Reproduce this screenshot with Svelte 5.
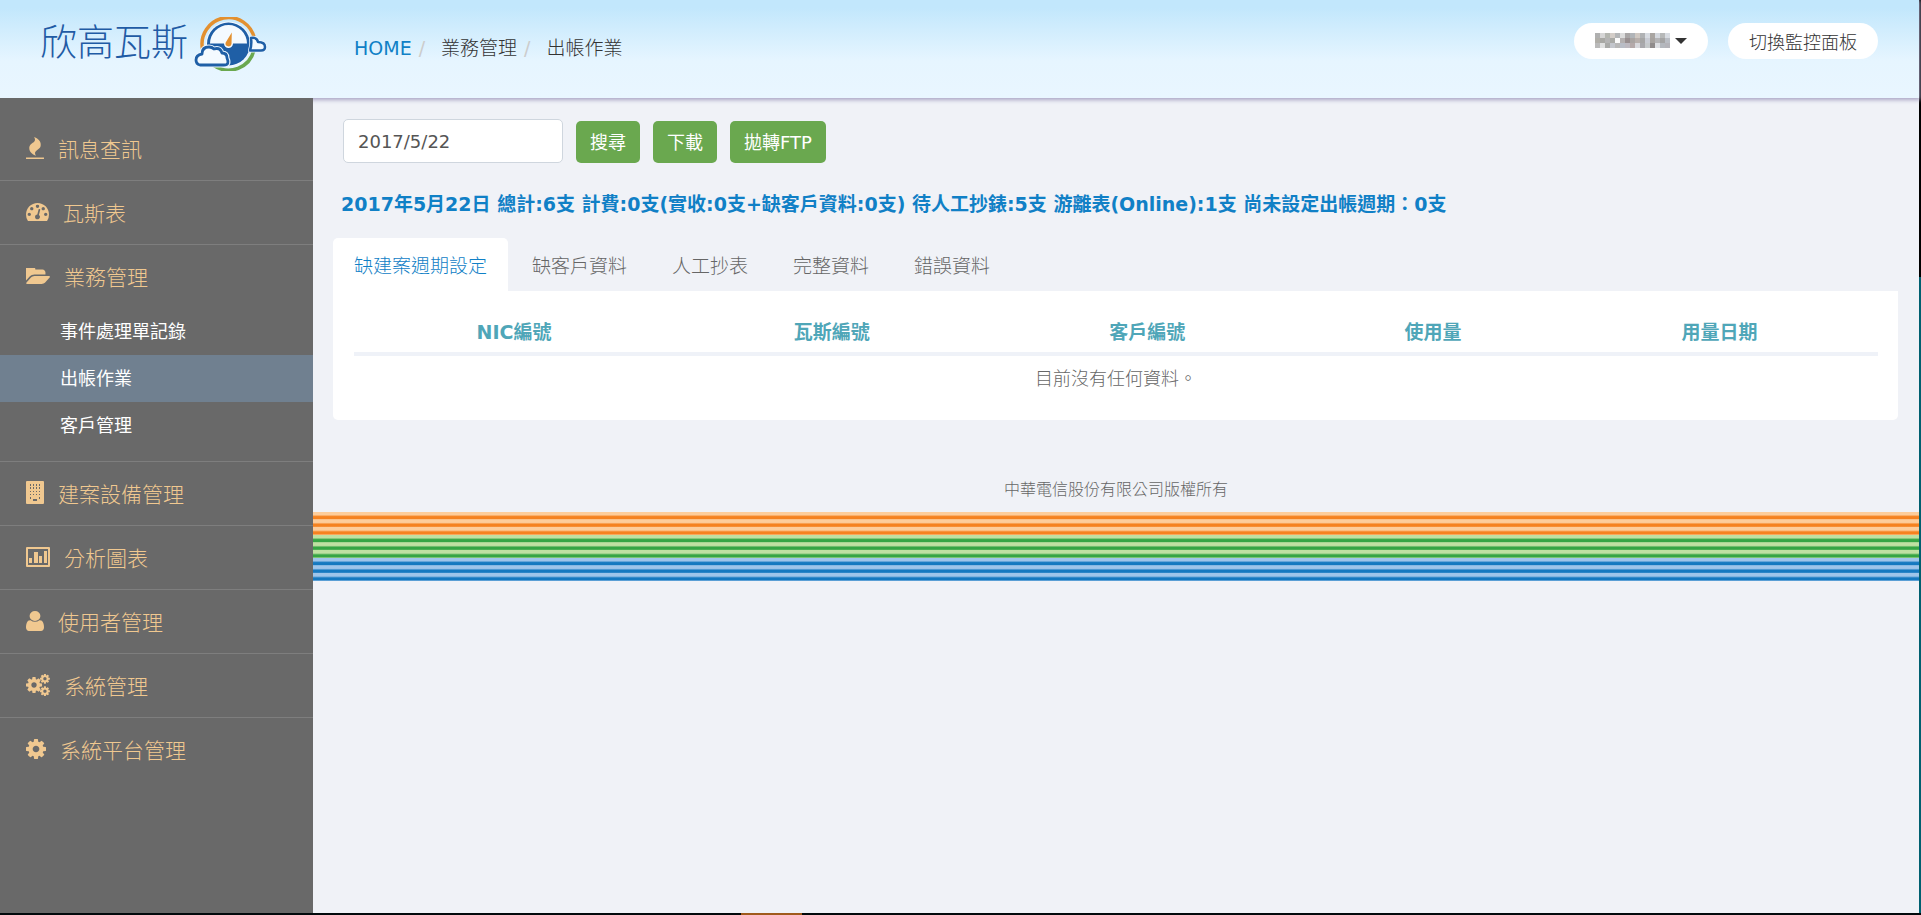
<script>
  let date = '2017/5/22';
  let activeTab = 0;

  const cog =
    'M1152 896q0-106-75-181t-181-75-181 75-75 181 75 181 181 75 181-75 75-181zm512-109v222q0 12-8 23t-20 13l-185 28q-19 54-39 91 35 50 107 138 10 12 10 25t-9 23q-27 37-99 108t-94 71q-12 0-26-9l-138-108q-44 23-91 38-16 136-29 186-7 28-36 28h-222q-14 0-24.5-8.5t-11.5-21.5l-28-184q-49-16-90-37l-141 107q-10 9-25 9-14 0-25-11-126-114-165-168-7-10-7-23 0-12 8-23 15-21 51-66.5t54-70.5q-27-50-41-99l-183-27q-13-2-21-12.5t-8-23.5v-222q0-12 8-23t19-13l186-28q14-46 39-92-40-57-107-138-10-12-10-24 0-10 9-23 26-36 98.5-107.5t94.5-71.5q13 0 26 10l138 107q44-23 91-38 16-136 29-186 7-28 36-28h222q14 0 24.5 8.5t11.5 21.5l28 184q49 16 90 37l142-107q9-9 24-9 13 0 25 10 129 119 165 170 7 8 7 22 0 12-8 23-15 21-51 66.5t-54 70.5q26 50 41 98l183 28q13 2 21 12.5t8 23.5z';

  const icons = {
    fire: {
      width: 18,
      height: 22,
      box: '192 0 1408 1792',
      path: 'M1600 1696v64q0 13-9.5 22.5t-22.5 9.5h-1344q-13 0-22.5-9.5t-9.5-22.5v-64q0-13 9.5-22.5t22.5-9.5h1344q13 0 22.5 9.5t9.5 22.5zm-256-1056q0 78-24.5 144t-64 112.5-87.5 88-96 77.5-87.5 72-64 81.5-24.5 96.5q0 96 67 224l-4-1 1 1q-90-41-160-83t-138.5-100-113.5-122.5-72.5-150.5-27.5-184q0-78 24.5-144t64-112.5 87.5-88 96-77.5 87.5-72 64-81.5 24.5-96.5q0-94-66-224l3 1-1-1q90 41 160 83t138.5 100 113.5 122.5 72.5 150.5 27.5 184z',
    },
    gauge: {
      width: 23,
      height: 18,
      box: '0 256 1792 1408',
      path: 'M384 1152q0-53-37.5-90.5t-90.5-37.5-90.5 37.5-37.5 90.5 37.5 90.5 90.5 37.5 90.5-37.5 37.5-90.5zm192-448q0-53-37.5-90.5t-90.5-37.5-90.5 37.5-37.5 90.5 37.5 90.5 90.5 37.5 90.5-37.5 37.5-90.5zm428 481l101-382q6-26-7.5-48.5t-38.5-29.5-48 6.5-30 39.5l-101 382q-60 5-107 43.5t-63 98.5q-20 77 20 146t117 89 146-20 89-117q16-60-6-117t-72-91zm660-33q0-53-37.5-90.5t-90.5-37.5-90.5 37.5-37.5 90.5 37.5 90.5 90.5 37.5 90.5-37.5 37.5-90.5zm-640-640q0-53-37.5-90.5t-90.5-37.5-90.5 37.5-37.5 90.5 37.5 90.5 90.5 37.5 90.5-37.5 37.5-90.5zm448 192q0-53-37.5-90.5t-90.5-37.5-90.5 37.5-37.5 90.5 37.5 90.5 90.5 37.5 90.5-37.5 37.5-90.5zm320 448q0 261-141 483-19 29-54 29h-1402q-35 0-54-29-141-221-141-483 0-182 71-348t191-286 286-191 348-71 348 71 286 191 191 286 71 348z',
    },
    folder: {
      width: 24,
      height: 16,
      box: '0 256 1815 1280',
      path: 'M1815 952q0 31-31 66l-336 396q-43 51-120.5 86.5t-143.5 35.5h-1088q-34 0-60.5-13t-26.5-43q0-31 31-66l336-396q43-51 120.5-86.5t143.5-35.5h1088q34 0 60.5 13t26.5 43zm-343-344v160h-832q-94 0-197 47.5t-164 119.5l-337 396-5 6q0-4-.5-12.5t-.5-12.5v-960q0-92 66-158t158-66h320q92 0 158 66t66 158v32h544q92 0 158 66t66 158z',
    },
    building: {
      width: 18,
      height: 23,
      box: '0 0 18 23',
      path: 'M1 0h16q1 0 1 1v21q0 1-1 1H1q-1 0-1-1V1q0-1 1-1zM4 3v2h1v-2zM7 3v2h1v-2zM10 3v2h1v-2zM13 3v2h1v-2zM4 6v2h1v-2zM7 6v2h1v-2zM10 6v2h1v-2zM13 6v2h1v-2zM4 10v1h1v-1zM7 10v1h1v-1zM10 10v1h1v-1zM13 10v1h1v-1zM4 13v1h1v-1zM7 13v1h1v-1zM10 13v1h1v-1zM13 13v1h1v-1zM4 16v2h1v-2zM13 16v2h1v-2zM7 18v2h4v-2z',
    },
    chart: {
      width: 24,
      height: 20,
      box: '0 0 24 20',
      path: 'M1 0h22q1 0 1 1v18q0 1-1 1H1q-1 0-1-1V1q0-1 1-1zM2 2v16h20V2zM3 11h3v5H3zM8 5h4v11H8zM13 9h3v7h-3zM18 4h3v12h-3z',
    },
    user: {
      width: 18,
      height: 20,
      box: '256 128 1280 1536',
      path: 'M1536 1399q0 109-62.5 187t-150.5 78h-854q-88 0-150.5-78t-62.5-187q0-85 8.5-160.5t31.5-152 58.5-131 94-89 134.5-34.5q131 128 313 128t313-128q76 0 134.5 34.5t94 89 58.5 131 31.5 152 8.5 160.5zm-256-887q0 159-112.5 271.5t-271.5 112.5-271.5-112.5-112.5-271.5 112.5-271.5 271.5-112.5 271.5 112.5 112.5 271.5z',
    },
    cogs: { width: 24, height: 22, box: '0 0 24 22' },
    cog: { width: 20, height: 20, box: '128 128 1536 1536', path: cog },
  };

  const menu = [
    { label: '訊息查訊', icon: 'fire' },
    { label: '瓦斯表', icon: 'gauge' },
    {
      label: '業務管理',
      icon: 'folder',
      children: ['事件處理單記錄', '出帳作業', '客戶管理'],
    },
    { label: '建案設備管理', icon: 'building' },
    { label: '分析圖表', icon: 'chart' },
    { label: '使用者管理', icon: 'user' },
    { label: '系統管理', icon: 'cogs' },
    { label: '系統平台管理', icon: 'cog' },
  ];

  const tabs = ['缺建案週期設定', '缺客戶資料', '人工抄表', '完整資料', '錯誤資料'];
  const columns = ['NIC編號', '瓦斯編號', '客戶編號', '使用量', '用量日期'];

  // masked user name, one colour per 5px block
  const mask = [
    ['#b0b0b0', '#d6d6d6', '#b4b6b0', '#d3cdc8', '#b4b6b8', '#dcdcdc', '#a9a6a6', '#b0b4b8', '#cfc8c2', '#b0b2b4', '#d8dce2', '#a9a5a1', '#d4d8de', '#b6b8b8', '#d8dce2'],
    ['#b0aea8', '#a8a8a4', '#b4b4b4', '#a9aaa6', '#fbfbfb', '#b4b0b0', '#988f90', '#a9a4a2', '#b8b0ac', '#a6a6a6', '#c9ccd4', '#a6a29f', '#b4b4b6', '#a4a4a4', '#b9bdc4'],
    ['#bababa', '#dfe0e0', '#a9aaa8', '#c3c6cc', '#b8b8b8', '#b9bdc6', '#bdb9c0', '#b4a9a9', '#d8d8dc', '#a9a9ad', '#c6cacc', '#8f8b8b', '#dcdee2', '#b4b8be', '#b4b4ba'],
  ];
</script>

<div class="page">
  <header>
    <a class="brand" href="#home">
      <span>欣高瓦斯</span>
      <svg width="73" height="54" viewBox="0 0 73 54" aria-hidden="true">
        <path d="M8.500 32A26 26 0 1 1 60.500 22" fill="none" stroke="#e3902f" stroke-width="3.500" />
        <path d="M60 33A26 26 0 0 1 20 48.500" fill="none" stroke="#6aa84f" stroke-width="3.500" />
        <circle cx="34.500" cy="27" r="22.500" fill="#f4faff" />
        <circle cx="34.500" cy="27" r="21.500" fill="#1f5fa6" />
        <path d="M16 26.500a18.500 18.500 0 0 1 37 0h-14a4.500 4.500 0 0 1-9 0z" fill="#f4faff" />
        <path d="M37.800 15.500l-.3 11.500a3 3 0 1 1-5.800-1.500z" fill="#e3902f" />
        <g stroke-linejoin="round">
          <path d="M57 21q6-1 7 4 7 0 7 5 0 3.500-4 3.500H56q2-6 1-12.500z" fill="#e9f5fe" stroke="#e9f5fe" stroke-width="4" />
          <path d="M57 21q6-1 7 4 7 0 7 5 0 3.500-4 3.500H56q2-6 1-12.500z" fill="#f4faff" stroke="#1f5fa6" stroke-width="2.500" />
          <path d="M6 48q-4-1-4-5 0-5 6-6 0-7 7-7 3 0 5 2 6-2 8 4 5 0 5 5 3 7-3 7z" fill="#e9f5fe" stroke="#e9f5fe" stroke-width="5" />
          <path d="M6 48q-4-1-4-5 0-5 6-6 0-7 7-7 3 0 5 2 6-2 8 4 5 0 5 5 3 7-3 7z" fill="#f4faff" stroke="#1f5fa6" stroke-width="2.800" />
        </g>
      </svg>
    </a>
    <nav class="breadcrumb" aria-label="breadcrumb">
      <a href="#home">HOME</a>
      <span>業務管理</span>
      <span>出帳作業</span>
    </nav>
    <div class="account">
      <button class="pill user" type="button" aria-label="使用者">
        <svg width="75" height="15" viewBox="0 0 75 15" shape-rendering="crispEdges" aria-hidden="true">
          {#each mask as row, y}
            {#each row as fill, x}
              <rect x={x * 5} y={y * 5} width="5" height="5" {fill} />
            {/each}
          {/each}
        </svg>
        <i class="caret"></i>
      </button>
      <button class="pill" type="button">切換監控面板</button>
    </div>
  </header>

  <div class="body">
    <aside>
      <ul class="menu">
        {#each menu as item}
          <li>
            <a class="item" href="#menu">
              <svg
                width={icons[item.icon].width}
                height={icons[item.icon].height}
                viewBox={icons[item.icon].box}
                preserveAspectRatio="none"
                fill="currentColor"
                fill-rule={item.icon === 'chart' || item.icon === 'building' ? 'evenodd' : 'nonzero'}
                aria-hidden="true"
              >
                {#if item.icon === 'cogs'}
                  <g transform="translate(-1.400 1.600) scale(0.0105)"><path d={cog} /></g>
                  <g transform="translate(13.200 -1) scale(0.0064)"><path d={cog} /></g>
                  <g transform="translate(13.200 11.500) scale(0.0064)"><path d={cog} /></g>
                {:else}
                  <path d={icons[item.icon].path} />
                {/if}
              </svg>
              {item.label}
            </a>
            {#if item.children}
              <ul class="submenu">
                {#each item.children as child}
                  <li><a class:active={child === '出帳作業'} href="#submenu">{child}</a></li>
                {/each}
              </ul>
            {/if}
          </li>
        {/each}
      </ul>
    </aside>

    <main>
      <form on:submit|preventDefault>
        <input type="text" aria-label="日期" bind:value={date} />
        <button type="submit">搜尋</button>
        <button type="button">下載</button>
        <button type="button">拋轉FTP</button>
      </form>

      <p class="summary">
        2017年5月22日 總計:6支 計費:0支(實收:0支+缺客戶資料:0支) 待人工抄錶:5支 游離表(Online):1支 尚未設定出帳週期：0支
      </p>

      <div class="tabs" role="tablist">
        {#each tabs as tab, i}
          <button
            type="button"
            role="tab"
            aria-selected={activeTab === i}
            class:active={activeTab === i}
            on:click={() => (activeTab = i)}>{tab}</button>
        {/each}
      </div>

      <section class="panel">
        <table>
          <thead>
            <tr>
              {#each columns as column}
                <th>{column}</th>
              {/each}
            </tr>
          </thead>
          <tbody>
            <tr>
              <td colspan="5">目前沒有任何資料。</td>
            </tr>
          </tbody>
        </table>
      </section>

      <footer>
        <p>中華電信股份有限公司版權所有</p>
        <div class="stripe orange"></div>
        <div class="stripe green"></div>
        <div class="stripe blue"></div>
      </footer>
    </main>
  </div>
</div>

<style>
  :global(body) {
    margin: 0;
    background: #f0f2f7;
  }

  .page {
    box-sizing: border-box;
    display: flex;
    flex-direction: column;
    min-height: 100vh;
    padding: 0 2px 2px 0;
    /* orange mark and dark line at the bottom, black and teal line at the right */
    background:
      linear-gradient(90deg, #02090c 741px, #a05a1c 741px 802px, #02090c 802px) bottom / 100% 2px no-repeat,
      linear-gradient(#000 277px, #006070 277px) right / 2px 100% no-repeat,
      #f0f2f7;
    font-family: 'DejaVu Sans', 'Noto Sans CJK TC', sans-serif;
    font-size: 18px;
    color: #666;
  }

  a {
    text-decoration: none;
  }

  ul {
    margin: 0;
    padding: 0;
    list-style: none;
  }

  button,
  input {
    font-family: inherit;
    font-size: 18px;
  }

  button {
    border: 0;
    cursor: pointer;
  }

  header {
    box-sizing: border-box;
    display: flex;
    align-items: flex-start;
    height: 98px;
    background: linear-gradient(#c2e7fc 8%, #e6f5ff 62%, #e9f6ff);
    box-shadow: 0 1px 4px 1px #a9a4c4;
  }

  .brand {
    box-sizing: border-box;
    display: flex;
    gap: 4px;
    width: 313px;
    padding: 17px 0 0 40px;
    color: #1f5ba5;
    font-size: 37px;
    font-weight: 300;
    line-height: 54px;
  }

  .brand span {
    min-width: 150px;
  }

  .breadcrumb {
    display: flex;
    padding: 34px 0 0 41px;
    font-size: 19px;
    line-height: 28px;
    color: #333;
  }

  .breadcrumb a {
    color: #1080c6;
  }

  .breadcrumb span {
    font-weight: 300;
  }

  .breadcrumb span::before {
    content: '/';
    padding: 0 16px 0 7px;
    color: #ccc;
    font-weight: 400;
  }

  .account {
    display: flex;
    gap: 20px;
    margin-left: auto;
    padding: 23px 41px 0 0;
  }

  .pill {
    display: flex;
    align-items: center;
    height: 36px;
    padding: 0 21px 1px;
    border-radius: 18px;
    background: #fff;
    color: #333;
    font-weight: 300;
  }

  .user {
    gap: 5px;
  }

  .caret {
    border: 6px solid transparent;
    border-top-color: #333;
    border-bottom: 0;
  }

  .body {
    flex: 1;
    display: flex;
  }

  aside {
    position: relative;
    flex: none;
    width: 313px;
    padding-top: 19px;
    box-sizing: border-box;
    background: #696969;
  }

  .menu > li + li {
    border-top: 1px solid #7e7e7e;
  }

  .item {
    box-sizing: border-box;
    display: flex;
    align-items: center;
    gap: 14px;
    height: 63px;
    padding: 0 0 2px 26px;
    color: #f0c890;
    font-size: 21px;
    font-weight: 300;
  }

  .submenu {
    padding-bottom: 12px;
  }

  .submenu a {
    display: block;
    padding-left: 60px;
    color: #fff;
    line-height: 47px;
  }

  .submenu .active {
    background: #708090;
  }

  main {
    flex: 1;
    min-width: 0;
  }

  form {
    display: flex;
    align-items: flex-end;
    gap: 13px;
    padding: 21px 30px 0;
  }

  form input {
    box-sizing: border-box;
    width: 220px;
    height: 44px;
    padding: 0 14px;
    border: 1px solid #cfd6de;
    border-radius: 5px;
    background: #fff;
    color: #555;
  }

  form button {
    height: 42px;
    padding: 0 14px 2px;
    border-radius: 5px;
    background: #6aa84f;
    color: #fff;
  }

  .summary {
    margin: 27px 28px 20px;
    color: #1080c6;
    font-size: 19px;
    font-weight: bold;
    line-height: 28px;
  }

  .tabs {
    display: flex;
    gap: 3px;
    padding: 0 20px;
  }

  .tabs button {
    height: 53px;
    padding: 0 21px;
    border-radius: 5px 5px 0 0;
    background: transparent;
    color: #666;
    font-size: 19px;
    font-weight: 300;
  }

  .tabs .active {
    background: #fff;
    color: #1080c6;
  }

  .panel {
    margin: 0 21px 0 20px;
    padding: 20px 20px 20px 21px;
    border-radius: 0 0 5px 5px;
    background: #fff;
  }

  table {
    width: 100%;
    border-collapse: collapse;
    table-layout: fixed;
  }

  th {
    height: 39px;
    padding: 0 0 2px;
    border-bottom: 4px solid #eff2f8;
    color: #4fa6b8;
    font-size: 19px;
  }

  th:nth-child(1) {
    width: 21%;
  }

  th:nth-child(2),
  th:nth-child(3) {
    width: 20.7%;
  }

  th:nth-child(4) {
    width: 16.8%;
  }

  td {
    height: 42px;
    padding: 0 0 2px;
    font-weight: 300;
    text-align: center;
  }

  footer p {
    margin: 56px 0 8px;
    font-size: 16px;
    font-weight: 300;
    line-height: 28px;
    text-align: center;
  }

  .stripe {
    height: 23px;
    background: repeating-linear-gradient(var(--light) 0 12%, var(--dark) 20% 29%, var(--light) 33.33%);
  }

  .orange {
    --light: #fdcd9b;
    --dark: #f58220;
  }

  .green {
    --light: #bfe0a2;
    --dark: #36a544;
  }

  .blue {
    --light: #9fc5ea;
    --dark: #1679c0;
  }
</style>
